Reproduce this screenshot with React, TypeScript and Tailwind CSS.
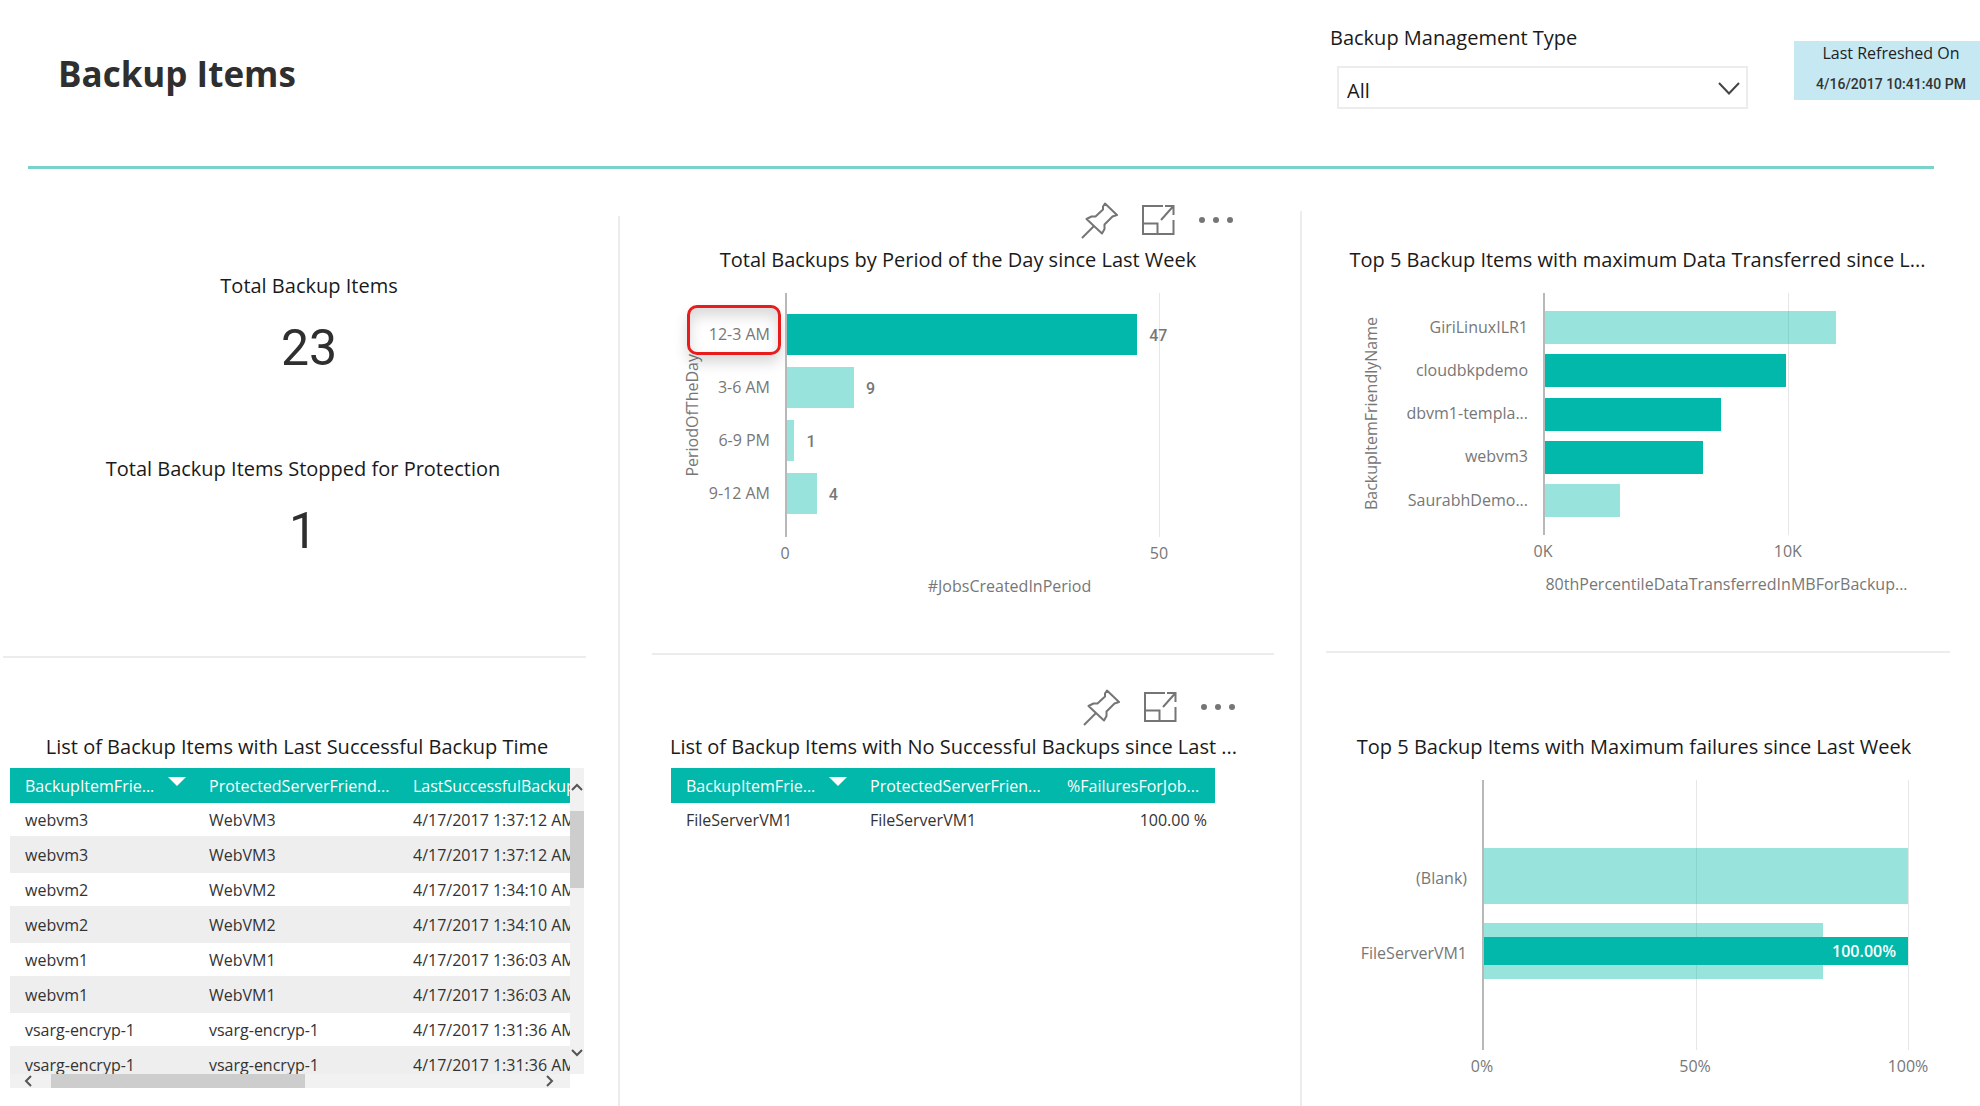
import type { ReactNode } from 'react'
import { clsx } from 'clsx'

type Bar = { label: string; value: number; text?: string; dim?: boolean; marked?: boolean }
type Tick = { at: number; label: string }

const PERIODS: Bar[] = [
  { label: '12-3 AM', value: 47, text: '47', marked: true },
  { label: '3-6 AM', value: 9, text: '9', dim: true },
  { label: '6-9 PM', value: 1, text: '1', dim: true },
  { label: '9-12 AM', value: 4, text: '4', dim: true },
]

const TRANSFERS: Bar[] = [
  { label: 'GiriLinuxILR1', value: 11950, dim: true },
  { label: 'cloudbkpdemo', value: 9900 },
  { label: 'dbvm1-templa...', value: 7250 },
  { label: 'webvm3', value: 6500 },
  { label: 'SaurabhDemo...', value: 3100, dim: true },
]

const BACKUPS = [
  ['webvm3', 'WebVM3', '4/17/2017 1:37:12 AM'],
  ['webvm3', 'WebVM3', '4/17/2017 1:37:12 AM'],
  ['webvm2', 'WebVM2', '4/17/2017 1:34:10 AM'],
  ['webvm2', 'WebVM2', '4/17/2017 1:34:10 AM'],
  ['webvm1', 'WebVM1', '4/17/2017 1:36:03 AM'],
  ['webvm1', 'WebVM1', '4/17/2017 1:36:03 AM'],
  ['vsarg-encryp-1', 'vsarg-encryp-1', '4/17/2017 1:31:36 AM'],
  ['vsarg-encryp-1', 'vsarg-encryp-1', '4/17/2017 1:31:36 AM'],
]

function Toolbar() {
  return (
    <div className="flex h-[38px] items-center justify-end gap-[23px] text-[#757575]">
      <button aria-label="Pin visual">
        <svg width="37" height="37" viewBox="0 0 37 37" fill="none" stroke="currentColor" strokeWidth="2" strokeLinejoin="round">
          <path d="M24 1.5 L36 13 L31.5 14.5 L23.5 22.5 V27 L21 31.5 L5.5 17 L10.5 14.5 H14.5 L22 7.5 V4.5 Z" />
          <path d="M13 24 L1 36" />
        </svg>
      </button>
      <button aria-label="Focus mode">
        <svg width="34" height="32" viewBox="0 0 34 32" fill="none" stroke="currentColor" strokeWidth="2">
          <path d="M22 2 H2 V30 H32.5 V16" />
          <path d="M2 19.5 H16.5 V30" />
          <path d="M20 16 L32 2.5 M24 2 H32.5 V11" />
        </svg>
      </button>
      <button aria-label="More options">
        <svg width="36" height="8" viewBox="0 0 36 8" fill="currentColor">
          <circle cx="4" cy="4" r="3" />
          <circle cx="18" cy="4" r="3" />
          <circle cx="32" cy="4" r="3" />
        </svg>
      </button>
    </div>
  )
}

function Panel({ title, toolbar, className, children }: { title: string; toolbar?: boolean; className?: string; children: ReactNode }) {
  return (
    <section className={className}>
      {toolbar ? <Toolbar /> : <div className="h-[38px]" />}
      <h2 className="mt-[7px] flex justify-center text-[20px] leading-7 whitespace-nowrap text-[#1a1a1a]">{title}</h2>
      {children}
    </section>
  )
}

function Divider({ className }: { className: string }) {
  return (
    <div className="flow-root h-[37px]">
      <hr className={clsx('border-t-2 border-[#ececec]', className)} />
    </div>
  )
}

function Plot({ ticks, title, className, children }: { ticks: Tick[]; title?: string; className: string; children: ReactNode }) {
  return (
    <div className="min-w-0 flex-1">
      <div className={clsx('relative border-l-2 border-[#b8b8b8]', className)}>
        {ticks.filter(t => t.at > 0).map(t => (
          <div key={t.label} className="absolute inset-y-0 w-px bg-[#e6e6e6]" style={{ left: `${t.at}%` }} />
        ))}
        {children}
      </div>
      <div className="relative mt-1 h-6">
        {ticks.map(t => (
          <span key={t.label} className="absolute -translate-x-1/2 leading-6" style={{ left: `${t.at}%` }}>{t.label}</span>
        ))}
      </div>
      {title && <div className="mt-[9px] text-center leading-6 whitespace-nowrap">{title}</div>}
    </div>
  )
}

type BarChartProps = {
  bars: Bar[]
  max: number
  ticks: Tick[]
  yTitle: string
  xTitle: string
  plotClass: string
  barClass: string
  labelClass: string
}

function BarChart({ bars, max, ticks, yTitle, xTitle, plotClass, barClass, labelClass }: BarChartProps) {
  return (
    <div className="mt-[19px] flex items-start text-[16px] text-[#777]">
      <div className={clsx('flex w-5 items-center justify-center !py-0', plotClass)}>
        <span className="rotate-180 leading-5 whitespace-nowrap [writing-mode:vertical-rl]">{yTitle}</span>
      </div>
      <div className={clsx('mr-[15px] flex flex-col justify-between', plotClass, labelClass)}>
        {bars.map(b => (
          <div key={b.label} className={clsx('relative flex items-center justify-end pb-0.5 whitespace-nowrap', barClass)}>
            {b.label}
            {b.marked && (
              <span className="absolute -top-[9px] -right-[11px] h-[50px] w-[94px] rounded-[10px] border-3 border-[#e81c1c] shadow-[0_8px_14px_rgba(0,0,0,0.15),inset_0_8px_14px_rgba(0,0,0,0.15)]" />
            )}
          </div>
        ))}
      </div>
      <Plot ticks={ticks} title={xTitle} className={clsx('flex flex-col justify-between', plotClass)}>
        {bars.map(b => (
          <div key={b.label} className={clsx('relative flex items-center', barClass)}>
            <div className={clsx('h-full', b.dim ? 'bg-[#01b8aa]/40' : 'bg-[#01b8aa]')} style={{ width: `${(b.value / max) * 100}%` }} />
            {b.text && <span className="ml-3 pt-0.5 font-[Roboto,sans-serif] font-medium">{b.text}</span>}
          </div>
        ))}
      </Plot>
    </div>
  )
}

function SortArrow() {
  return (
    <svg width="18" height="9" viewBox="0 0 18 9" fill="white" className="absolute top-[9px] right-2">
      <path d="M0 0 H18 L9 9 Z" />
    </svg>
  )
}

function Arrow({ d, label, className }: { d: string; label: string; className: string }) {
  return (
    <button aria-label={label} className={className}>
      <svg width="12" height="12" viewBox="0 0 12 12" fill="none" stroke="#555" strokeWidth="2">
        <path d={d} />
      </svg>
    </button>
  )
}

function Card({ label, value, className }: { label: string; value: string; className?: string }) {
  return (
    <div className={clsx('flex flex-col items-center', className)}>
      <div className="text-[20px] leading-7 whitespace-nowrap text-[#1a1a1a]">{label}</div>
      <div className="mt-[18px] font-[Roboto,sans-serif] text-[50px] leading-[60px] text-[#2f2f2f]">{value}</div>
    </div>
  )
}

export default function App() {
  return (
    <div className="flex min-h-screen flex-col overflow-x-hidden bg-white font-['Open_Sans','Noto_Sans',sans-serif] text-[#333]">
      <header className="flex h-[166px] items-start">
        <h1 className="mt-[50px] ml-[58px] flex-1 text-[35px] leading-[48px] font-bold text-[#2f2f2f]">Backup Items</h1>
        <div className="mt-6 mr-[46px]">
          <label htmlFor="mgmt-type" className="block text-[20px] leading-7 text-[#1a1a1a]">Backup Management Type</label>
          <div className="relative mt-[14px] ml-[7px]">
            <select id="mgmt-type" className="h-[43px] w-[411px] appearance-none border-2 border-[#ececec] bg-white px-2 pt-1.5 text-[20px] text-[#1a1a1a]">
              <option>All</option>
            </select>
            <svg width="22" height="13" viewBox="0 0 22 13" fill="none" stroke="#444" strokeWidth="2" className="pointer-events-none absolute top-4 right-2">
              <path d="M1 1 L11 11.5 L21 1" />
            </svg>
          </div>
        </div>
        <div className="mt-[41px] flex h-[59px] w-[186px] flex-col items-center bg-[#c5e8f2] pl-2 text-[#222]">
          <div className="text-[16px] leading-6">Last Refreshed On</div>
          <div className="mt-[7px] font-[Roboto,sans-serif] text-[14px] leading-6 font-medium text-[#333]">4/16/2017 10:41:40 PM</div>
        </div>
      </header>
      <div className="mr-[46px] ml-7 h-[3px] bg-[#7ad3ca]" />

      <main className="grid flex-1 grid-cols-[minmax(0,618fr)_2px_minmax(0,680fr)_2px_minmax(0,678fr)] pt-8">
        <div>
          <div className="flex h-[450px] flex-col gap-[77px] pt-[71px]">
            <Card label="Total Backup Items" value="23" />
            <Card label="Total Backup Items Stopped for Protection" value="1" className="mr-3" />
          </div>
          <Divider className="mt-[5px] mr-8 ml-[3px]" />
          <Panel title="List of Backup Items with Last Successful Backup Time" className="pr-[34px] pl-[10px]">
            <div className="mt-[7px] flex">
              <div className="min-w-0 flex-1">
                <div className="h-[306px] overflow-hidden">
                  <table className="w-full table-fixed text-left text-[16px] whitespace-nowrap">
                    <thead className="bg-[#01b8aa] text-white">
                      <tr className="h-[35px]">
                        <th className="relative w-[184px] pl-[15px] font-normal">BackupItemFrie...<SortArrow /></th>
                        <th className="w-[204px] pl-[15px] font-normal">ProtectedServerFriend...</th>
                        <th className="pl-[15px] font-normal">LastSuccessfulBackupTime</th>
                      </tr>
                    </thead>
                    <tbody>
                      {BACKUPS.map((row, i) => (
                        <tr key={i} className="h-[33px] even:h-[37px] even:bg-[#eee]">
                          {row.map((cell, j) => <td key={j} className="pl-[15px]">{cell}</td>)}
                        </tr>
                      ))}
                    </tbody>
                  </table>
                </div>
                <div className="flex h-[14px] items-center bg-[#f1f1f1]">
                  <Arrow label="Scroll left" d="M8 1 L3 6 L8 11" className="ml-[13px]" />
                  <div className="ml-4 h-full w-[254px] bg-[#cdcdcd]" />
                  <Arrow label="Scroll right" d="M4 1 L9 6 L4 11" className="mr-[15px] ml-auto" />
                </div>
              </div>
              <div className="flex h-[306px] w-[14px] flex-col items-center bg-[#f1f1f1]">
                <Arrow label="Scroll up" d="M1 8 L6 3 L11 8" className="mt-[14px]" />
                <div className="mt-[17px] h-[77px] w-full bg-[#cdcdcd]" />
                <Arrow label="Scroll down" d="M1 4 L6 9 L11 4" className="mt-auto mb-4" />
              </div>
            </div>
          </Panel>
        </div>

        <div className="mt-[15px] bg-[#ececec]" />

        <div>
          <div className="h-[450px]">
            <Panel title="Total Backups by Period of the Day since Last Week" toolbar className="pr-[66px] pl-[62px]">
              <BarChart
                bars={PERIODS}
                max={60}
                ticks={[{ at: 0, label: '0' }, { at: 83.3, label: '50' }]}
                yTitle="PeriodOfTheDay"
                xTitle="#JobsCreatedInPeriod"
                plotClass="h-[244px] pt-[21px] pb-[23px]"
                barClass="h-[41px]"
                labelClass="w-[68px]"
              />
            </Panel>
          </div>
          <Divider className="mt-[2px] mr-[26px] ml-8" />
          <Panel title="List of Backup Items with No Successful Backups since Last ..." toolbar className="pr-16 pl-[51px]">
            <table className="mt-[7px] w-[544px] table-fixed text-left text-[16px] whitespace-nowrap">
              <thead className="bg-[#01b8aa] text-white">
                <tr className="h-[35px]">
                  <th className="relative w-[184px] pl-[15px] font-normal">BackupItemFrie...<SortArrow /></th>
                  <th className="w-[197px] pl-[15px] font-normal">ProtectedServerFrien...</th>
                  <th className="pl-[15px] font-normal">%FailuresForJob...</th>
                </tr>
              </thead>
              <tbody>
                <tr className="h-[33px]">
                  <td className="pl-[15px]">FileServerVM1</td>
                  <td className="pl-[15px]">FileServerVM1</td>
                  <td className="pr-2 text-right">100.00 %</td>
                </tr>
              </tbody>
            </table>
          </Panel>
        </div>

        <div className="mt-[10px] bg-[#ececec]" />

        <div>
          <div className="h-[450px]">
            <Panel title="Top 5 Backup Items with maximum Data Transferred since L..." className="pr-[58px] pl-[51px]">
              <div className="pr-3 pl-2">
                <BarChart
                  bars={TRANSFERS}
                  max={15000}
                  ticks={[{ at: 0, label: '0K' }, { at: 66.7, label: '10K' }]}
                  yTitle="BackupItemFriendlyName"
                  xTitle="80thPercentileDataTransferredInMBForBackup..."
                  plotClass="h-[242px] py-[18px]"
                  barClass="h-[33px]"
                  labelClass="w-[147px]"
                />
              </div>
            </Panel>
          </div>
          <Divider className="mr-[30px] ml-6" />
          <Panel title="Top 5 Backup Items with Maximum failures since Last Week" className="pr-[70px] pl-14">
            <div className="mt-[19px] flex items-start pr-0.5 text-[16px] text-[#777]">
              <div className="mr-[15px] flex w-[109px] flex-col gap-[19px] pt-[68px] text-right">
                <div className="h-14 leading-[60px]">(Blank)</div>
                <div className="h-14 leading-[60px]">FileServerVM1</div>
              </div>
              <Plot
                ticks={[{ at: 0, label: '0%' }, { at: 50, label: '50%' }, { at: 100, label: '100%' }]}
                className="flex h-[270px] flex-col gap-[19px] pt-[68px]"
              >
                <div className="relative h-14 bg-[#01b8aa]/40" />
                <div className="relative h-14">
                  <div className="h-full w-4/5 bg-[#01b8aa]/40" />
                  <div className="absolute inset-x-0 top-[14px] flex h-7 items-center justify-end bg-[#01b8aa] pr-3 font-semibold text-white">100.00%</div>
                </div>
              </Plot>
            </div>
          </Panel>
        </div>
      </main>
    </div>
  )
}
